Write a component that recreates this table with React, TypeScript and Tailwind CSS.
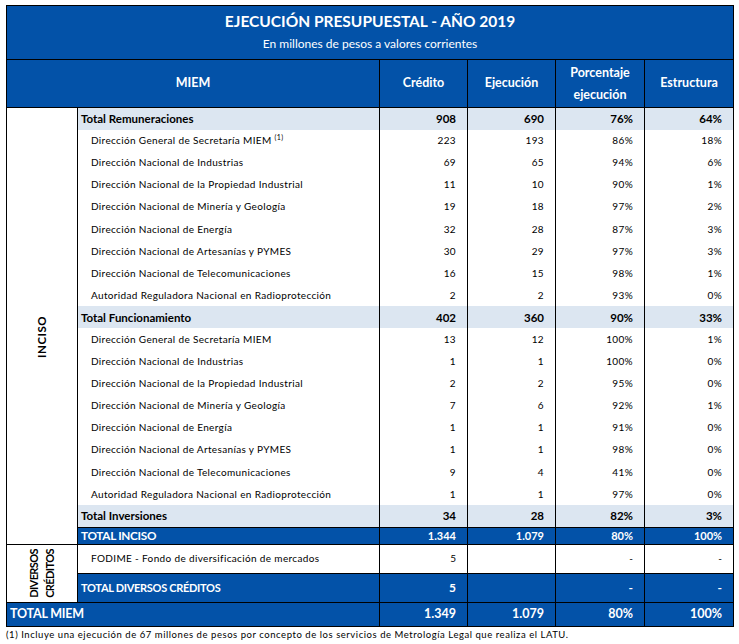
import React from "react";

type Row = { label: string; credito: string; ejecucion: string; pct: string; est: string; total?: boolean; note?: boolean };

const direcciones = [
  "Dirección General de Secretaría MIEM",
  "Dirección Nacional de Industrias",
  "Dirección Nacional de la Propiedad Industrial",
  "Dirección Nacional de Minería y Geología",
  "Dirección Nacional de Energía",
  "Dirección Nacional de Artesanías y PYMES",
  "Dirección Nacional de Telecomunicaciones",
  "Autoridad Reguladora Nacional en Radioprotección",
];

const remuneraciones = [
  ["223", "193", "86%", "18%"],
  ["69", "65", "94%", "6%"],
  ["11", "10", "90%", "1%"],
  ["19", "18", "97%", "2%"],
  ["32", "28", "87%", "3%"],
  ["30", "29", "97%", "3%"],
  ["16", "15", "98%", "1%"],
  ["2", "2", "93%", "0%"],
];

const funcionamiento = [
  ["13", "12", "100%", "1%"],
  ["1", "1", "100%", "0%"],
  ["2", "2", "95%", "0%"],
  ["7", "6", "92%", "1%"],
  ["1", "1", "91%", "0%"],
  ["1", "1", "98%", "0%"],
  ["9", "4", "41%", "0%"],
  ["1", "1", "97%", "0%"],
];

const rows: Row[] = [
  { label: "Total Remuneraciones", credito: "908", ejecucion: "690", pct: "76%", est: "64%", total: true },
  ...remuneraciones.map((r, i) => ({ label: direcciones[i], credito: r[0], ejecucion: r[1], pct: r[2], est: r[3], note: i === 0 })),
  { label: "Total Funcionamiento", credito: "402", ejecucion: "360", pct: "90%", est: "33%", total: true },
  ...funcionamiento.map((r, i) => ({ label: direcciones[i], credito: r[0], ejecucion: r[1], pct: r[2], est: r[3] })),
  { label: "Total Inversiones", credito: "34", ejecucion: "28", pct: "82%", est: "3%", total: true },
];

const font = "font-['Lato','Liberation_Sans',sans-serif]";

export default function App() {
  return (
    <div className={`bg-white w-[739px] h-[644px] pt-[5px] pl-[6px] ${font} text-black`}>
      <table className="border-collapse table-fixed w-[727px]">
        <colgroup>
          <col className="w-[71px]" />
          <col className="w-[302px]" />
          <col className="w-[88px]" />
          <col className="w-[88px]" />
          <col className="w-[89px]" />
          <col className="w-[89px]" />
        </colgroup>
        <tbody>
          <tr className="h-[54px] bg-[#0352a8] text-white">
            <td colSpan={6} className="border border-black text-center align-top pt-[4px]">
              <div className="text-[15.5px] font-bold leading-[22px]">EJECUCIÓN PRESUPUESTAL - AÑO 2019</div>
              <div className="text-[12px] leading-[20px] mt-[2px]">En millones de pesos a valores corrientes</div>
            </td>
          </tr>
          <tr className="h-[48px] bg-[#0352a8] text-white text-[12.5px] font-bold">
            <td colSpan={2} className="border border-black text-center">MIEM</td>
            <td className="border border-black text-center">Crédito</td>
            <td className="border border-black text-center">Ejecución</td>
            <td className="border border-black text-center leading-[22px]">Porcentaje<br />ejecución</td>
            <td className="border border-black text-center">Estructura</td>
          </tr>
          {rows.map((r, i) => (
            <tr key={i} className={`h-[22.1px] ${r.total ? "bg-[#dce6f1] font-bold text-[11.5px]" : "text-[10px] tracking-[0.35px]"} ${i === rows.length - 1 ? "border-b border-black" : ""}`}>
              {i === 0 && (
                <td rowSpan={rows.length + 1} className="border border-black bg-white">
                  <div className="flex items-center justify-center pt-[22px]">
                    <span className="[writing-mode:vertical-rl] rotate-180 font-bold text-[11.5px] tracking-[0.5px]">INCISO</span>
                  </div>
                </td>
              )}
              <td className={`border-x border-black ${r.total ? "pl-[3px]" : "pl-[13px]"} whitespace-nowrap`}>
                {r.label}
                {r.note && <sup className="text-[7px] ml-[3px] -top-[4px]">(1)</sup>}
              </td>
              <td className="border-x border-black text-right pr-[11px]">{r.credito}</td>
              <td className="border-x border-black text-right pr-[11px]">{r.ejecucion}</td>
              <td className="border-x border-black text-right pr-[11px]">{r.pct}</td>
              <td className="border-x border-black text-right pr-[11px]">{r.est}</td>
            </tr>
          ))}
          <tr className="h-[17px] bg-[#0352a8] text-white font-bold text-[11px] leading-[14px]">
            <td className="border border-black pl-[3px] text-[11.75px] tracking-[-0.3px]">TOTAL INCISO</td>
            <td className="border border-black text-right pr-[11px]">1.344</td>
            <td className="border border-black text-right pr-[11px]">1.079</td>
            <td className="border border-black text-right pr-[11px]">80%</td>
            <td className="border border-black text-right pr-[11px]">100%</td>
          </tr>
          <tr className="h-[29px] text-[10px]">
            <td rowSpan={2} className="border border-black">
              <div className="flex items-center justify-center">
                <span className="[writing-mode:vertical-rl] rotate-180 font-bold text-[11px] leading-[16px] tracking-[-0.6px] text-center">
                  DIVERSOS<br />CRÉDITOS
                </span>
              </div>
            </td>
            <td className="border border-black pl-[13px] tracking-[0.35px] whitespace-nowrap">FODIME - Fondo de diversificación de mercados</td>
            <td className="border border-black text-right pr-[11px]">5</td>
            <td className="border border-black"></td>
            <td className="border border-black text-right pr-[11px]">-</td>
            <td className="border border-black text-right pr-[11px]">-</td>
          </tr>
          <tr className="h-[29px] bg-[#0352a8] text-white font-bold text-[12px]">
            <td className="border border-black pl-[3px] text-[11px] tracking-[-0.3px]">TOTAL DIVERSOS CRÉDITOS</td>
            <td className="border border-black text-right pr-[11px]">5</td>
            <td className="border border-black"></td>
            <td className="border border-black text-right pr-[11px]">-</td>
            <td className="border border-black text-right pr-[11px]">-</td>
          </tr>
          <tr className="h-[24px] bg-[#0352a8] text-white font-bold text-[12.5px]">
            <td colSpan={2} className="border border-black pl-[3px] tracking-[-0.2px]">TOTAL MIEM</td>
            <td className="border border-black text-right pr-[11px]">1.349</td>
            <td className="border border-black text-right pr-[11px]">1.079</td>
            <td className="border border-black text-right pr-[11px]">80%</td>
            <td className="border border-black text-right pr-[11px]">100%</td>
          </tr>
        </tbody>
      </table>
      <p className="text-[9.5px] tracking-[0.55px] leading-[14px] mt-[1px]">
        (1) Incluye una ejecución de 67 millones de pesos por concepto de los servicios de Metrología Legal que realiza el LATU.
      </p>
    </div>
  );
}
